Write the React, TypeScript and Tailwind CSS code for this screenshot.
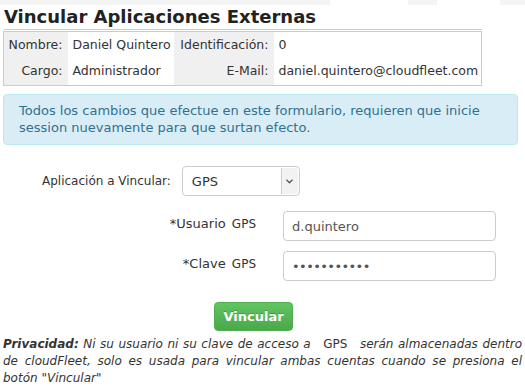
import React from "react"

const font = "font-['Tahoma','DejaVu_Sans',sans-serif]"

function InfoTable() {
    return (
        <table className="mt-[1px] ml-[3px] w-[479px] border border-[#cccccc] border-collapse text-[12.5px] text-[#333]">
            <tbody>
                <tr className="h-[27px]">
                    <td className="w-[64px] bg-[#f0f0f0] text-right pr-[5px]">Nombre:</td>
                    <td className="w-[106px] pl-[5px]">Daniel Quintero</td>
                    <td className="w-[100px] bg-[#f0f0f0] text-right pr-[5px]">Identificación:</td>
                    <td className="pl-[5px]">0</td>
                </tr>
                <tr className="h-[27px]">
                    <td className="bg-[#f0f0f0] text-right pr-[5px]">Cargo:</td>
                    <td className="pl-[5px]">Administrador</td>
                    <td className="bg-[#f0f0f0] text-right pr-[5px]">E-Mail:</td>
                    <td className="pl-[5px]">daniel.quintero@cloudfleet.com</td>
                </tr>
            </tbody>
        </table>
    )
}

function TextInput({ value, password }: { value: string; password?: boolean }) {
    return (
        <input
            readOnly
            type={password ? "password" : "text"}
            value={value}
            className={`w-[213px] h-[30px] border border-[#cccccc] rounded-[4px] px-[8px] text-[13px] text-[#555] bg-white outline-none ${password ? "tracking-[-0.6px]" : ""}`}
        />
    )
}

export default function App() {
    return (
        <div className={`${font} w-[525px] h-[392px] bg-white overflow-hidden text-[#333]`}>
            {/* remnant of the page header */}
            <div className="flex h-[5px]">
                <div className="w-[330px] bg-[#f4f4f4]" />
                <div className="w-[78px] bg-white" />
                <div className="w-[29px] bg-[#f4f4f4]" />
                <div className="w-[63px] bg-white" />
                <div className="flex-1 bg-[#f4f4f4]" />
            </div>

            <h1 className="ml-[4px] mr-[43px] text-[18px] leading-[24px] font-bold text-[#222] border-b border-[#cccccc]">
                Vincular Aplicaciones Externas
            </h1>

            <InfoTable />

            <div className="mt-[8px] mx-[3px] w-[515px] border border-[#bce8f1] bg-[#d9edf7] rounded-[4px] pl-[15px] pr-[15px] pt-[7px] pb-[8px] text-[13px] leading-[17px] text-[#31708f]">
                Todos los cambios que efectue en este formulario, requieren que inicie session nuevamente para que surtan efecto.
            </div>

            <div className="flex items-center mt-[21px] pl-[42px] gap-[11px] text-[12px]">
                <span>Aplicación a Vincular:</span>
                <div className="flex w-[118px] h-[30px] border border-[#cccccc] rounded-[4px] bg-white overflow-hidden text-[13px]">
                    <span className="flex-1 flex items-center pl-[9px] pt-[2px] text-[#333]">GPS</span>
                    <span className="w-[17px] my-[1px] mr-[1px] border-l border-[#cccccc] bg-[#f2f2f2] rounded-r-[3px] flex items-center justify-center">
                        <svg width="7" height="5" viewBox="0 0 7 5">
                            <path d="M0.5 0.8 L3.5 3.8 L6.5 0.8" fill="none" stroke="#555" strokeWidth="1.3" />
                        </svg>
                    </span>
                </div>
            </div>

            <div className="flex flex-col gap-[10px] mt-[15px]">
                <div className="flex items-center">
                    <div className="w-[256px] text-right text-[13px] pb-[4px]">
                        *Usuario <span className="ml-[2px] text-[12px]">GPS</span>
                    </div>
                    <div className="ml-[27px]">
                        <TextInput value="d.quintero" />
                    </div>
                </div>
                <div className="flex items-center">
                    <div className="w-[256px] text-right text-[13px] pb-[4px]">
                        *Clave <span className="ml-[2px] text-[12px]">GPS</span>
                    </div>
                    <div className="ml-[27px]">
                        <TextInput value="danielq2015" password />
                    </div>
                </div>
            </div>

            <div className="mt-[21px] ml-[214px]">
                <button className="w-[79px] h-[29px] rounded-[4px] border border-[#4cae4c] bg-gradient-to-b from-[#62c462] to-[#4aa84a] text-white font-bold text-[13px] [text-shadow:0_-1px_0_rgba(0,0,0,0.2)]">
                    Vincular
                </button>
            </div>

            <p className="mt-[5px] mx-[3px] text-[12px] leading-[17px] italic text-justify text-[#333]">
                <b>Privacidad:</b> Ni su usuario ni su clave de acceso a <span className="not-italic mx-[8px]">GPS</span> serán almacenadas dentro de cloudFleet, solo es usada para vincular ambas cuentas cuando se presiona el botón "Vincular"
            </p>
        </div>
    )
}
